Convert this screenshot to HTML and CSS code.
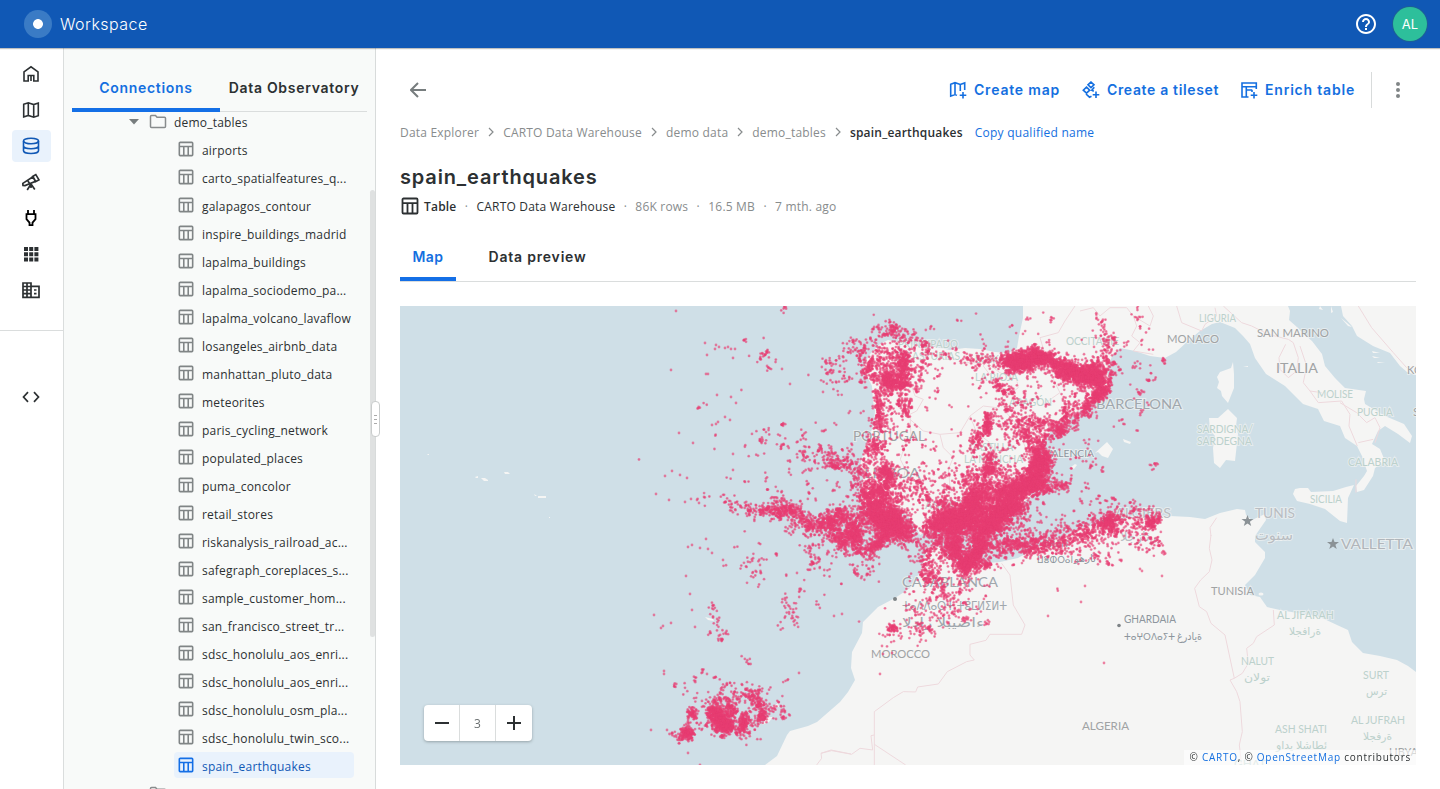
FILE: index.html
```html
<!DOCTYPE html>
<html lang="en">
<head>
<meta charset="utf-8">
<title>Workspace</title>
<link rel="stylesheet" href="styles.css">
</head>
<body>
<svg width="0" height="0" class="defs">
  <symbol id="table" viewBox="0 0 18 18"><path d="M2.5 1.5h13a1 1 0 0 1 1 1v13a1 1 0 0 1-1 1h-13a1 1 0 0 1-1-1v-13a1 1 0 0 1 1-1zM1.5 6.2h15M6.5 6.2v10.3M11.5 6.2v10.3" fill="none" stroke="currentColor" stroke-width="1.8"/></symbol>
  <symbol id="chev" viewBox="0 0 6 10"><path d="M1 1l4 4-4 4" fill="none" stroke="currentColor" stroke-width="1.2"/></symbol>
  <symbol id="folder" viewBox="0 0 18 15"><path d="M1.500 12.300V2.500q0-1 1-1h4l1.500 1.700h7.500q1 0 1 1v8.300q0 1-1 1h-13q-1 0-1-1z" fill="none" stroke="#888c8d" stroke-width="1.500"/></symbol>
</svg>
<header class="topbar">
  <span class="logo"></span><span class="brand">Workspace</span>
  <svg class="help" viewBox="0 0 24 24" width="24" height="24"><path fill="currentColor" d="M11 18h2v-2h-2v2zm1-16C6.480 2 2 6.480 2 12s4.480 10 10 10 10-4.480 10-10S17.520 2 12 2zm0 18c-4.410 0-8-3.590-8-8s3.590-8 8-8 8 3.590 8 8-3.590 8-8 8zm0-14c-2.210 0-4 1.790-4 4h2c0-1.100.9-2 2-2s2 .9 2 2c0 2-3 1.750-3 5h2c0-2.250 3-2.500 3-5 0-2.210-1.790-4-4-4z"/></svg>
  <span class="avatar">AL</span>
</header>
<div class="body">
  <nav class="rail">
    <a><svg viewBox="0 0 18 18"><path d="M2 16V6.800L9 1.800l7 5V16h-4.200v-5.500H6.200V16zM9 11v5" fill="none" stroke="currentColor" stroke-width="1.600"/></svg></a>
    <a><svg viewBox="0 0 18 18"><path d="M1.700 3.300l4.600-1.500 5.400 1.800 4.600-1.500v12.600l-4.600 1.500-5.400-1.800-4.600 1.500zM6.300 1.800v12.600M11.700 3.600v12.600" fill="none" stroke="currentColor" stroke-width="1.600"/></svg></a>
    <a class="on"><svg viewBox="0 0 18 18"><g fill="none" stroke="currentColor" stroke-width="1.600"><ellipse cx="9" cy="4" rx="7.500" ry="2.700"/><path d="M1.500 4v9.800c0 1.500 3.400 2.700 7.500 2.700s7.500-1.200 7.500-2.700V4M1.500 9c0 1.500 3.400 2.700 7.500 2.700s7.500-1.200 7.500-2.700"/></g></svg></a>
    <a><svg viewBox="0 0 18 18"><path d="M1 12.500L.8 10.400 11 3.800l2.600 4.600L3 12.600zM10.600 3.500l3.200-1.900 3.200 5.300-3.400 1.700zM5.500 7.300l2 3.200M9 11l-3.800 6M9 11v4M9 11l3.800 5.500" fill="none" stroke="currentColor" stroke-width="1.700"/></svg></a>
    <a class="black"><svg viewBox="0 0 18 18"><path d="M6 1v4M12 1v4M4.500 5.200h9v5l-3 3.500v2.500h-3v-2.500l-3-3.500z" fill="none" stroke="currentColor" stroke-width="1.800"/></svg></a>
    <a><svg viewBox="0 0 18 18"><path d="M2 2h4v4H2zM7.200 2h4v4h-4zM12.400 2h4v4h-4zM2 7.200h4v4H2zM7.200 7.200h4v4h-4zM12.400 7.200h4v4h-4zM2 12.400h4v4H2zM7.200 12.400h4v4h-4zM12.400 12.400h4v4h-4z" fill="currentColor"/></svg></a>
    <a><svg viewBox="0 0 18 18"><path d="M1 2h8v14.300H1zM9 5.300h8v11H9zM1 5.500h8M1 9h8M1 12.600h8M5 2v14M12 9h2.500M12 12.600h2.500" fill="none" stroke="currentColor" stroke-width="1.700"/></svg></a>
    <hr>
    <a class="dev"><svg viewBox="0 0 18 18"><path d="M6 4.200L1.500 9 6 13.800M12 4.200L16.500 9 12 13.800" fill="none" stroke="currentColor" stroke-width="1.700"/></svg></a>
  </nav>
  <aside class="panel">
    <div class="ptabs"><span class="ptab sel">Connections</span><span class="ptab">Data Observatory</span></div>
    <div class="tree">
      <div class="folder"><svg width="10" height="6" viewBox="0 0 10 6"><path d="M0 0h10L5 5.500z" fill="#777d7e"/></svg><svg class="fic" width="18" height="15"><use href="#folder"/></svg><span>demo_tables</span></div>
      <div id="tree"></div>
      <div class="folder next"><svg width="10" height="6" viewBox="0 0 10 6"><path d="M3 0l5 5-5 5z" fill="#777d7e"/></svg><svg class="fic" width="18" height="15"><use href="#folder"/></svg></div>
    </div>
    <i class="scroll"></i>
    <div class="grip"><i></i><i></i><i></i></div>
  </aside>
  <main class="main">
    <div class="actions">
      <svg class="back" width="16" height="16" viewBox="0 0 16 16"><path d="M8 1L1 8l7 7M1 8h15" fill="none" stroke="currentColor" stroke-width="2"/></svg>
      <a class="act a1"><svg width="18" height="18" viewBox="0 0 18 18"><path d="M8 14.300L6 13.600l-4.300 1.600V3.200L6 1.700l5.300 1.800 4.400-1.600V9M6 1.700v12M11.300 3.500V10M14 11v6.500M10.700 14.300h6.600" fill="none" stroke="currentColor" stroke-width="1.600"/></svg><span>Create map</span></a>
      <a class="act a2"><svg width="18" height="18" viewBox="0 0 18 18"><path d="M9 1l3 2.800-3 2.800-3-2.800zM4.500 6.200l3.200 3-3.200 3-3.200-3zM12.300 6.300l-2.500 3 2 1M4 13l3.500 3.200 2-1M14 10.500V17M10.700 13.700h6.600" fill="none" stroke="currentColor" stroke-width="1.600"/></svg><span>Create a tileset</span></a>
      <a class="act a3"><svg width="18" height="18" viewBox="0 0 18 18"><path d="M8.500 16H2V2h14.300v6M2 5.800h14.300M6.300 5.800V16M6.300 9h6M12 9v2M14 11v6.500M10.700 14.300h6.600" fill="none" stroke="currentColor" stroke-width="1.600"/></svg><span>Enrich table</span></a>
      <i class="vsep"></i>
      <svg class="more" width="4" height="16" viewBox="0 0 4 16"><g fill="#808586"><circle cx="2" cy="2" r="2"/><circle cx="2" cy="8" r="2"/><circle cx="2" cy="14" r="2"/></g></svg>
    </div>
    <div class="crumbs"><span>Data Explorer</span><svg><use href="#chev"/></svg><span>CARTO Data Warehouse</span><svg><use href="#chev"/></svg><span>demo data</span><svg><use href="#chev"/></svg><span>demo_tables</span><svg><use href="#chev"/></svg><b>spain_earthquakes</b><a>Copy qualified name</a></div>
    <h1>spain_earthquakes</h1>
    <div class="meta"><svg width="18" height="18"><use href="#table"/></svg><b>Table</b><em>·</em><strong>CARTO Data Warehouse</strong><em>·</em><span>86K rows</span><em>·</em><span>16.5 MB</span><em>·</em><span>7 mth. ago</span></div>
    <div class="tabs"><span class="tab sel">Map</span><span class="tab t2">Data preview</span></div>
    <div class="map">
      <svg class="base" width="1016" height="459" viewBox="0 0 1016 459">
        <g fill="#f5f5f4">
          <path d="M623 0V12L619 30 617 42 609 47 595 46 580 43 565 42 550 44 535 41 515 39 502 37 488 34 480 38 470 48 466 55 463 63 468 72 472 80 473 95 475 105 474 118 470 128 465 142 462 152 460 160 464 166 462 180V195L475 200 490 198 503 205 513 216 520 229 530 224 545 221 585 221 595 215 603 218 612 205 622 198 631 190V180L636 170 632 155 643 135 655 120 670 112 690 98 705 90 710 80 707 65 712 50 720 42 735 45 750 50 765 52 776 46 788 35 800 25 812 18 820 16 835 22 843 30 850 38 855 52 866 68 885 80 903 98 918 103 924 115 940 120 945 132 957 140 962 150 967 165 964 170 956 180 957 186 964 184 973 170 975 162 985 155 980 143 972 138 978 125 985 120 998 128 1010 137 1012 130 1004 118 985 110 965 98 964 93 966 85 945 82 935 72 925 60 922 48 912 35 905 29 898 22 889 14 890 5 888 0z"/>
          <path d="M941 0L943 10 952 20 957 30 973 40 990 47 1000 60 1007 66 1016 69V0zM920 0l3 4-4-1zM931 0l2 6-2 1zM941 12l11 9-4-1zM972 45l8 2h-7zM972 50l8 2h-6zM977 56l8 0-7 1z"/>
          <path d="M833 56L834 68V82L828 97 822 90 821 85 817 82 819 76 817 71 820 66 831 62zM828 103L837 112 836 120 838 128 835 155 826 154 820 162 814 157 813 142 815 130 810 124 809 112 818 112zM893 188L895 183 900 182 908 182 911 186 933 185 946 181 954 179 948 192 947 217 940 215 925 203 910 198 897 195zM723 133l8 3-1 2-6-2zM695 147L707 136 713 143 708 152 702 150 698 146zM671 161l4-3 2 1-3 4zM843 61l5-1v1z"/>
          <path d="M27 149h2v-1h-1zM75 171l3-1v2h-2zM81 172l4 0 3 2v1h-4zM104 166h4l2 2h-5zM134 188l3 2-2 0zM138 190h8v2h-8zM149 211h1v1h-1zM305 311l8 2 1 2-6-1zM336 422l8 0-4 4zM371 402l7-5 1 4zM362 419l5-8 6 0-4 5z"/>
          <path d="M365 459L377 450 387 429 390 425 408 420 417 416 440 396 448 386 455 374 451 362 452 346 462 327 463 316 478 301 495 292 510 282 520 266 528 241 540 240 546 251 560 256 575 258 588 257 600 256 618 252 640 240 660 232 680 222 707 217 730 212 770 210 790 211 805 213 820 207 837 203 845 204 846 209 852 214 865 208 866 214 855 230V236L865 246V252L855 269 845 279 850 289 860 291 867 301 880 304 920 311 937 319 948 324 952 336 963 347 980 350 997 354 1008 360 1016 366V459z"/>
          <ellipse cx="861" cy="288" rx="2.500" ry="1.500"/>
        </g>
        <g fill="none" stroke="#eed9dd" stroke-width="3">
          <g transform="translate(340 229) scale(.3333)"><path d="M785 85L810 120 820 210 855 270 845 298H750L738 316 690 328V360L703 375 680 380 622 410 595 447 533 456 527 471 490 470 460 488 403 530V690M403 600l-10 2 5 43-38-5-25 18-60-11-32 8 2 15-15 20M403 628l94 62M243 655l30-10 60 12"/></g>
          <g transform="translate(680 229) scale(.3333)"><path d="M393 0L388 40 396 75 388 110 362 135 344 160 358 215 380 230 393 265 435 300 463 430 450 435 470 470 480 500 487 590 478 630 485 690M580 225L583 270 530 305 520 325 500 340 505 385 487 415 463 430"/></g>
          <g transform="translate(680 0) scale(.3333)"><path d="M393 690l-3-25 20-30M0 15l40-10 20 25 30-25 50 0 20 25 10 30-15 30 25 20-20 25 60 10M160 30l50 30 10-30-15-30M290 0l15 50 60 25 10-20 35-25-5-25M430 0l55 50 30 10 50 25 60 15 15 10 15 45-5 40-25 20-25-25-3-35 20-40M660 120l20 60-10 50 20 25 35 5M690 255l25 35 70-5 25 40-3 35 25 60M780 290l50 30 30 30 25-15 15 30-15 45M835 410l45-10M835 0l40 65 65 75 40 45M828 520v40"/></g>
          <g transform="translate(340 0) scale(.3333)"><path d="M1005 0l-30 45-20 35-55 15 12 40-25 20M425 245l90-5 10 30 25 10-20 35-20 10 3 65-15 20-17 50 15 30-10 55 20 30M510 340l40 35 50 10 10 40 30 30-15 35 5 50-20 15 30 30M600 385l60-5 30-50 40-30 40 5 25-45-15-30-20-10-30-40 20-30M740 170l40 30 50 20 5 25-25 20-40-20M690 330l20 50 40 30 30 50M940 220l20 40-50 35M790 310l40 45 30 80M660 170l50 0 20-20"/></g>
        </g>
        <g class="labels" id="labels"></g>
      </svg>
      <canvas id="quakes" width="1016" height="459"></canvas>
      <div class="zoom"><span><svg width="14" height="14"><path d="M0 7h14" stroke="#2c3032" stroke-width="2"/></svg></span><span class="lvl">3</span><span><svg width="14" height="14"><path d="M0 7h14M7 0v14" stroke="#2c3032" stroke-width="2"/></svg></span></div>
      <div class="attr">© <a>CARTO</a>, © <a>OpenStreetMap</a> contributors</div>
    </div>
  </main>
</div>
<script src="app.js"></script>
</body>
</html>
```
FILE: styles.css
```css
* { box-sizing: border-box; }
body { margin: 0; height: 789px; overflow: hidden; font-family: "Open Sans", sans-serif; font-size: 12px; letter-spacing: .2px; color: #2c3032; background: #fff; display: flex; flex-direction: column; }
.defs { position: absolute; }
.topbar { height: 48px; flex: none; background: #1058b5; color: #fff; display: flex; align-items: center; padding: 0 13px 0 24px; position: relative; z-index: 3; box-shadow: 0 1px 1px rgba(44,48,50,.3); }
.logo { width: 28px; height: 28px; border-radius: 50%; background: radial-gradient(circle, #fff 4.5px, #3a7bc5 5.3px); }
.brand { font: 300 16px Inter, sans-serif; letter-spacing: .45px; margin-left: 8px; padding-bottom: 1px; }
.help { margin-left: auto; }
.avatar { width: 34px; height: 34px; margin-left: 15px; border-radius: 50%; background: #2dbf9b; box-shadow: 0 0 0 1px #1d5f97; display: grid; place-items: center; font: 400 13px Inter, sans-serif; letter-spacing: 0; }
.body { flex: 1; min-height: 0; display: flex; }
.rail { width: 64px; flex: none; border-right: 1px solid #dadddd; padding: 10px 0 0 12px; display: flex; flex-direction: column; gap: 4px; color: #2c3032; }
.rail a { width: 39px; height: 32px; flex: none; border-radius: 4px; display: flex; align-items: center; padding-left: 10px; }
.rail a.on { background: #e9f2fc; color: #1058b5; }
.rail .black { color: #000; }
.rail svg { width: 18px; height: 18px; display: block; }
.rail hr { width: 63px; height: 1px; border: 0; background: #dadddd; margin: 20px 0 0 -12px; flex: none; }
.rail .dev { margin-top: 46px; }
.panel { width: 312px; flex: none; border-right: 1px solid #d8dbdb; background: #f8faf9; position: relative; padding: 16px 8px 0; display: flex; flex-direction: column; }
.ptabs { height: 48px; flex: none; display: flex; border-bottom: 1px solid #dadddd; position: relative; z-index: 1; font: 600 14px Inter, sans-serif; letter-spacing: .7px; }
.ptab { flex: none; width: 148px; height: 48px; display: grid; place-items: center; white-space: nowrap; border-bottom: 4px solid transparent; padding-top: 3px; }
.ptab.sel, .tab.sel { color: #146fe0; border-bottom-color: #146fe6; }
.tree { flex: 1; overflow: hidden; min-height: 0; }
.folder { height: 28px; margin-top: -4px; padding: 0 0 0 57px; display: flex; align-items: center; }
.folder .fic { margin: -1px 7px 0 10px; }
.folder span { padding-top: 1px; }
.folder.next { margin-top: 0; }
.row { height: 26px; margin: 0 13px 2px 102px; padding-left: 4px; border-radius: 4px; display: flex; align-items: center; }
.row svg { width: 16px; height: 16px; margin: -1px 8px 0 0; color: #808586; flex: none; }
.row span { padding-top: 3px; white-space: nowrap; }
.row.on { background: #e9f2fc; color: #1058b5; }
.row.on svg { color: #146fe6; }
.scroll { position: absolute; left: 306px; top: 142px; width: 5px; height: 447px; border-radius: 3px; background: #dfe1e1; }
.grip { position: absolute; z-index: 2; left: 307px; top: 353px; width: 9px; height: 36px; border: 1px solid #c9cccc; border-radius: 4px; background: #fff; display: flex; flex-direction: column; align-items: center; justify-content: center; gap: 3px; }
.grip i { width: 3px; height: 1px; background: #aaa; }
.main { flex: 1; min-width: 0; padding: 24px 24px 0; display: flex; flex-direction: column; }
.actions { height: 36px; display: flex; align-items: center; color: #146fe0; font: 600 14px Inter, sans-serif; letter-spacing: .8px; }
.back { color: #777d7e; margin-left: 10px; margin-right: auto; }
.act { display: flex; align-items: center; gap: 7px; white-space: nowrap; }
.act span { flex: none; padding-bottom: 2px; }
.a1 { width: 133px; } .a2 { width: 158px; letter-spacing: .65px; } .a3 { width: 131px; }
.vsep { width: 1px; height: 36px; background: #d8dbdb; }
.more { margin: 0 16px 0 24px; }
.crumbs { height: 18px; margin-top: 15px; display: flex; align-items: center; color: #888c8d; white-space: nowrap; }
.crumbs svg { width: 6px; height: 10px; margin: 0 9px; flex: none; }
.crumbs b { color: #2c3032; font-weight: 600; letter-spacing: .2px; }
.crumbs a { color: #146fe0; margin-left: 12px; letter-spacing: .25px; }
h1 { font: 600 20px/28px Inter, sans-serif; letter-spacing: .85px; margin: 22px 0 0; }
.meta { height: 20px; margin-top: 5px; padding-left: 1px; display: flex; align-items: center; color: #888c8d; white-space: nowrap; }
.meta svg { color: #2c3032; }
.meta b { font-weight: 600; color: #2c3032; margin-left: 5px; }
.meta strong { font-weight: 400; color: #2c3032; }
.meta em { font-style: normal; width: 20px; text-align: center; }
.tabs { height: 50px; flex: none; margin-top: 16px; display: flex; border-bottom: 1px solid #dadddd; font: 600 14px Inter, sans-serif; letter-spacing: .8px; }
.tab { width: 56px; height: 49px; display: grid; place-items: center; border-bottom: 4px solid transparent; white-space: nowrap; padding-top: 4px; }
.tab.sel { letter-spacing: .5px; }
.t2 { width: 163px; }
.map { width: 1016px; height: 459px; flex: none; margin-top: 24px; background: #cfdfe7; position: relative; overflow: hidden; }
.base, #quakes { position: absolute; inset: 0; }
.labels text { font-family: Lato, "DejaVu Sans", sans-serif; letter-spacing: 0; paint-order: stroke; stroke: #f5f5f4; stroke-opacity: .6; stroke-width: 2px; }
.labels .rtl { direction: ltr; unicode-bidi: bidi-override; }
.zoom { position: absolute; left: 24px; top: 399px; width: 108px; height: 36px; border-radius: 4px; background: #fff; display: grid; grid-template-columns: repeat(3, 1fr); box-shadow: 0 1px 3px rgba(44,48,50,.35); }
.zoom span { display: grid; place-items: center; }
.zoom .lvl { border: solid #dadddd; border-width: 0 1px; color: #6b7071; margin: 0 0 0 -1px; }
.attr { position: absolute; right: 0; bottom: 0; height: 15px; padding: 0 5px; background: rgba(255,255,255,.6); font-size: 10px; line-height: 15px; letter-spacing: .75px; white-space: nowrap; }
.attr a { color: #146fe0; }
```
FILE: app.js
```js
var names = ['airports', 'carto_spatialfeatures_q...', 'galapagos_contour', 'inspire_buildings_madrid', 'lapalma_buildings', 'lapalma_sociodemo_pa...', 'lapalma_volcano_lavaflow', 'losangeles_airbnb_data', 'manhattan_pluto_data', 'meteorites', 'paris_cycling_network', 'populated_places', 'puma_concolor', 'retail_stores', 'riskanalysis_railroad_ac...', 'safegraph_coreplaces_s...', 'sample_customer_hom...', 'san_francisco_street_tr...', 'sdsc_honolulu_aos_enri...', 'sdsc_honolulu_aos_enri...', 'sdsc_honolulu_osm_pla...', 'sdsc_honolulu_twin_sco...', 'spain_earthquakes'];
document.getElementById('tree').innerHTML = names.map(function (n) {
  return '<div class="row' + (n === 'spain_earthquakes' ? ' on' : '') + '"><svg><use href="#table"/></svg><span>' + n + '</span></div>';
}).join('');

// Place labels: text, x, baseline, width, size, colour
var G = '#a0a3a4', C = '#a0a7ad', R = '#bcd1cc', D = '#8d959d';
var labels = [
  ['PRINCIPADO', 498, 42, 60, 10.5, R], ['DE ASTURIAS', 496, 54, 64, 10.5, R], ['EUSKADI', 575, 57, 40, 10.5, R], ['LA RIOJA', 575, 75, 43, 10.5, R], ['ARAGÓN', 609, 100, 43, 10.5, R], ['CASTILLA-', 569, 145, 48, 10.5, R], ['LA MANCHA', 564, 157, 59, 10.5, R], ['ANDALUCÍA', 525, 203, 58, 10.5, R],
  ['OCCITANIE', 666, 39, 53, 10.5, R], ['LIGURIA', 799, 16, 37, 10.5, R], ['MOLISE', 917, 92, 36, 10.5, R], ['PUGLIA', 957, 110, 36, 10.5, R], ['CALABRIA', 948, 160, 50, 10.5, R], ['SICILIA', 910, 197, 32, 10.5, R], ['SARDIGNA/', 797, 127, 56, 10.5, R], ['SARDEGNA', 797, 139, 55, 10.5, R],
  ['PORTUGAL', 453, 135, 72, 13, G], ['LISBOA', 464, 172, 56, 13, C], ['BARCELONA', 696, 103, 86, 13, C], ['VALENCIA', 645, 151, 49, 10, D], ['MONACO', 767, 37, 52, 12, G], ['SAN MARINO', 857, 31, 72, 12, G], ['ITALIA', 876, 67, 42, 14, G],
  ['ALGIERS', 715, 212, 56, 13, '#b9bdc2'], ['TUNIS', 855, 212, 40, 13, '#b9bdc2'], ['VALLETTA', 941, 243, 72, 13, '#b0b5ba'], ['TUNISIA', 811, 289, 43, 12, G], ['CASABLANCA', 502, 281, 96, 13, C], ['ORAN', 642, 241, 26, 10, D], ['MOROCCO', 471, 352, 59, 12, G], ['ALGERIA', 682, 424, 47, 12, G], ['GHARDAIA', 724, 317, 52, 11, D],
  ['AL JIFARAH', 877, 313, 57, 10.5, R], ['NALUT', 841, 359, 33, 10.5, R], ['SURT', 963, 373, 26, 10.5, R], ['AL JUFRAH', 951, 418, 54, 10.5, R], ['ASH SHATI', 875, 427, 52, 10.5, R], ['LIBYA', 989, 450, 29, 12, G], ['GHAT', 834, 462, 32, 10.5, R], ['KOSOVO', 1007, 68, 47, 12, G], ['SHQIPËRIA', 1013, 110, 60, 12, G],
  ['ⵜⴰⴷⴷⴰⵔⵜ ⵜⵓⵎⵍⵉⵍⵜ', 502, 304, 105, 12, C], ['الدار البيضاء', 502, 321, 82, 13, C], ['ⵡⴻⵀⵔⴰⵏ', 637, 257, 36, 9, D], ['وهران', 674, 256, 22, 10, D], ['الجزائر', 720, 235, 36, 13, '#b9bdc2'], ['تونس', 855, 234, 38, 14, '#b9bdc2'], ['ⵜⴰⵖⵔⴷⴰⵢⵜ', 724, 334, 51, 10, D], ['غرداية', 777, 334, 25, 11, D], ['الجفارة', 889, 329, 32, 11, R], ['نالوت', 844, 375, 26, 11, R], ['سرت', 966, 389, 21, 11, R], ['الجفرة', 963, 434, 29, 11, R], ['وادي الشاطئ', 876, 443, 51, 11, R]
];
document.getElementById('labels').innerHTML = labels.map(function (l) {
  return '<text class="' + (/[\u0600-\u06ff]/.test(l[0]) ? 'rtl' : '') + '" x="' + l[1] + '" y="' + l[2] + '" textLength="' + l[3] + '" lengthAdjust="spacingAndGlyphs" font-size="' + l[4] + '" fill="' + l[5] + '">' + l[0] + '</text>';
}).join('') + [[847.5, 215], [933, 238], [707, 216]].map(function (p) {
  return '<path transform="translate(' + p + ')" d="M0-6l1.500 4H6L2.400.7 3.700 5 0 2.400-3.700 5-2.400.7-6-2h4.500z" fill="#8b9296"/>';
}).join('') + '<circle cx="495" cy="293" r="2" fill="#7d8386"/><circle cx="719" cy="319.500" r="1.800" fill="#7d8386"/>';

// Earthquake points
var ctx = document.getElementById('quakes').getContext('2d');
ctx.translate(-400, -306);
var seed = 11;
function rnd() { seed = (seed * 1664525 + 1013904223) % 4294967296; return seed / 4294967296; }
function gauss() { return Math.sqrt(-2 * Math.log(rnd() + 1e-9)) * Math.cos(6.28318 * rnd()); }
function dot(x, y) {
  if (x > 1165.500) return;
  ctx.fillStyle = 'rgba(231,62,115,.55)';
  ctx.beginPath(); ctx.arc(x, y, 1.400, 0, 7); ctx.fill();
  ctx.beginPath(); ctx.arc(x, y, .7, 0, 7); ctx.fill();
}
// x1, y1, x2, y2, spread, count
var clusters = [
  [880,368,908,380,8,250],[880,350,908,368,10,170],[902,352,904,378,3,170],[882,378,895,385,3.500,240],[895,385,910,384,3,100],[866,362,872,378,5,140],[892,330,896,332,3,60],[898,334,928,345,5,80],[878,328,880,350,5,40],[853,340,855,356,6,60],[824,362,834,368,5,35],[818,380,850,378,4,25],[910,365,925,385,8,70],
  [877,388,880,428,1.800,150],[885,395,905,405,9,75],[905,400,907,412,3,70],[885,410,875,440,6,75],[868,452,880,446,4,130],[880,435,920,440,13,60],[862,470,867,500,5,230],[885,468,887,476,3.500,220],[890,477,880,496,4,170],[875,490,890,500,11,230],[910,470,930,500,10,90],
  [866,508,902,528,7,1150],[880,518,906,532,5,700],[872,498,895,515,8,260],[852,524,857,540,4,320],[820,526,848,514,4.500,370],[760,511,798,511,3,180],[770,506,797,516,6,150],[798,516,815,530,4,170],[830,530,850,545,5,280],[850,545,870,553,5,130],[870,550,888,534,2.500,260],[885,530,912,538,6,160],[725,502,760,512,5,60],
  [1007,361,1048,357,3.800,1200],[1008,367,1030,366,2.500,250],[1050,362,1072,370,3.500,400],[1065,372,1100,377,4.500,1100],[1090,365,1098,380,5,280],[1034,348,1034,352,1.500,60],[1105,372,1100,395,5,170],[1093,398,1107,391,2.500,200],[1105,345,1110,362,5,70],[1097,310,1107,345,4,40],[1135,312,1143,345,4,22],[1110,350,1150,390,12,55],[1163,359,1163,360,1.200,10],
  [1098,398,1082,412,3,110],[1082,412,1050,435,6,210],[1062,430,1060,434,2,50],[1060,408,1090,400,8,90],[1045,430,1030,440,8,110],[1040,422,1047,430,6,90],[1036,448,1045,462,5,260],
  [988,414,987,434,1.800,140],[980,432,974,446,3,70],[990,455,988,475,3.500,190],[995,383,1008,397,3,70],[1000,405,1030,440,11,210],[1018,425,1030,440,3,80],[960,445,1000,455,16,110],[940,480,990,490,12,200],
  [920,350,975,358,7,85],[970,358,1005,358,5,70],[975,370,1030,400,14,90],
  [936,521,975,523,5.500,1200],[950,512,980,510,6,600],[970,505,985,490,5,380],[985,518,1016,508,5,1000],[978,532,1002,522,4,500],[997,498,1020,492,7,700],[1015,492,1045,470,5.500,900],[1033,470,1045,456,5,370],[1028,484,1050,488,4,250],[1050,489,1068,485,2,60],[965,495,1010,478,9,270],[910,490,940,505,8,120],[925,525,960,535,7,250],
  [952,535,956,552,4,350],[962,570,980,548,4,650],[975,538,985,548,4,260],[950,552,975,566,5,230],[987,565,988,566,1.800,50],[925,537,945,547,7,110],[980,540,1005,545,8,200],
  [1005,542,1030,548,4,180],[1030,548,1055,544,5,210],[1055,540,1085,534,6,160],[1085,530,1115,520,5,180],[1105,523,1116,522,3,120],[1110,518,1150,522,7,140],[1148,524,1157,518,3,110],[1080,535,1165,540,8,160],[1060,515,1160,508,10,80],[1000,520,1060,540,12,180],[1150,541,1165,552,5,35],[1065,550,1110,555,8,60],
  [925,550,935,585,6,170],[920,575,950,590,10,100],[960,580,965,600,10,55],[925,605,950,590,12,60],[905,622,985,612,7,75],[890,629,896,629,2.500,50],[888,630,900,632,7,20],[920,632,933,631,4,40],
  [713,711,724,726,3.500,550],[722,725,732,727,3,230],[723,700,732,714,5,130],[684,734,690,732,2.500,200],[691,711,693,716,2,70],[744,715,743,731,2.300,160],[752,695,761,706,2.500,100],[763,713,762,720,2.200,75],[700,705,760,705,14,220],[710,735,750,728,7,60],[780,702,783,718,5,35],[740,688,758,690,6,30],[676,737,680,743,3,12],
  [708,608,716,612,4,12],[710,627,723,633,4,28],[785,620,800,607,7,42],[820,565,818,550,8,55],[860,575,875,560,7,32],[752,560,757,582,5,28],[762,350,768,365,6,30],[740,350,745,352,5,5],[755,430,800,462,12,40],[800,450,835,462,8,90],[830,461,846,463,4,100],[845,462,865,470,8,55],[700,480,860,495,20,50],[720,540,830,575,25,45],[700,440,860,430,24,38],[780,308,788,310,2,7],[940,320,1035,340,12,25],[1100,410,1160,425,12,22],[1075,440,1095,485,13,50],[1150,463,1154,467,3,4],[980,310,1040,325,12,6],[700,650,760,675,12,7]
];
clusters.forEach(function (c) {
  var px = 0, py = 0;
  for (var i = 0; i < c[5]; i++) {
    if (i && rnd() < .5) {
      dot(px + gauss() * 1.800, py + gauss() * 1.800);
      continue;
    }
    var t = rnd(), s = c[4] * (rnd() < .15 ? 1.700 : 1);
    px = c[0] + (c[2] - c[0]) * t + gauss() * s;
    py = c[1] + (c[3] - c[1]) * t + gauss() * s;
    dot(px, py);
  }
});
var singles = [676,311,705,343,716,345,719,347,715,349,725,348,728,347,731,349,735,349,733,358,707,355,671,370,706,374,708,374,717,395,731,397,736,403,725,417,730,420,712,425,716,424,718,422,679,433,693,443,733,454,733,470,672,471,665,476,680,475,687,478,656,494,691,499,669,500,685,502,697,500,704,497,699,503,706,539,692,545,688,547,700,548,708,549,712,553,723,560,686,576,690,594,692,610,695,627,663,626,654,615,671,623,661,628,664,671,664,674,707,674,667,730,651,730,688,753,700,765,880,674,882,646,892,653,883,654,1048,616,1104,663,1081,602,1085,586,1112,565,1140,569,1142,571,1162,576,760,565,782,369,790,384,823,392,834,616,842,614,799,673];
for (var i = 0; i < singles.length; i += 2) dot(singles[i], singles[i + 1]);
```
